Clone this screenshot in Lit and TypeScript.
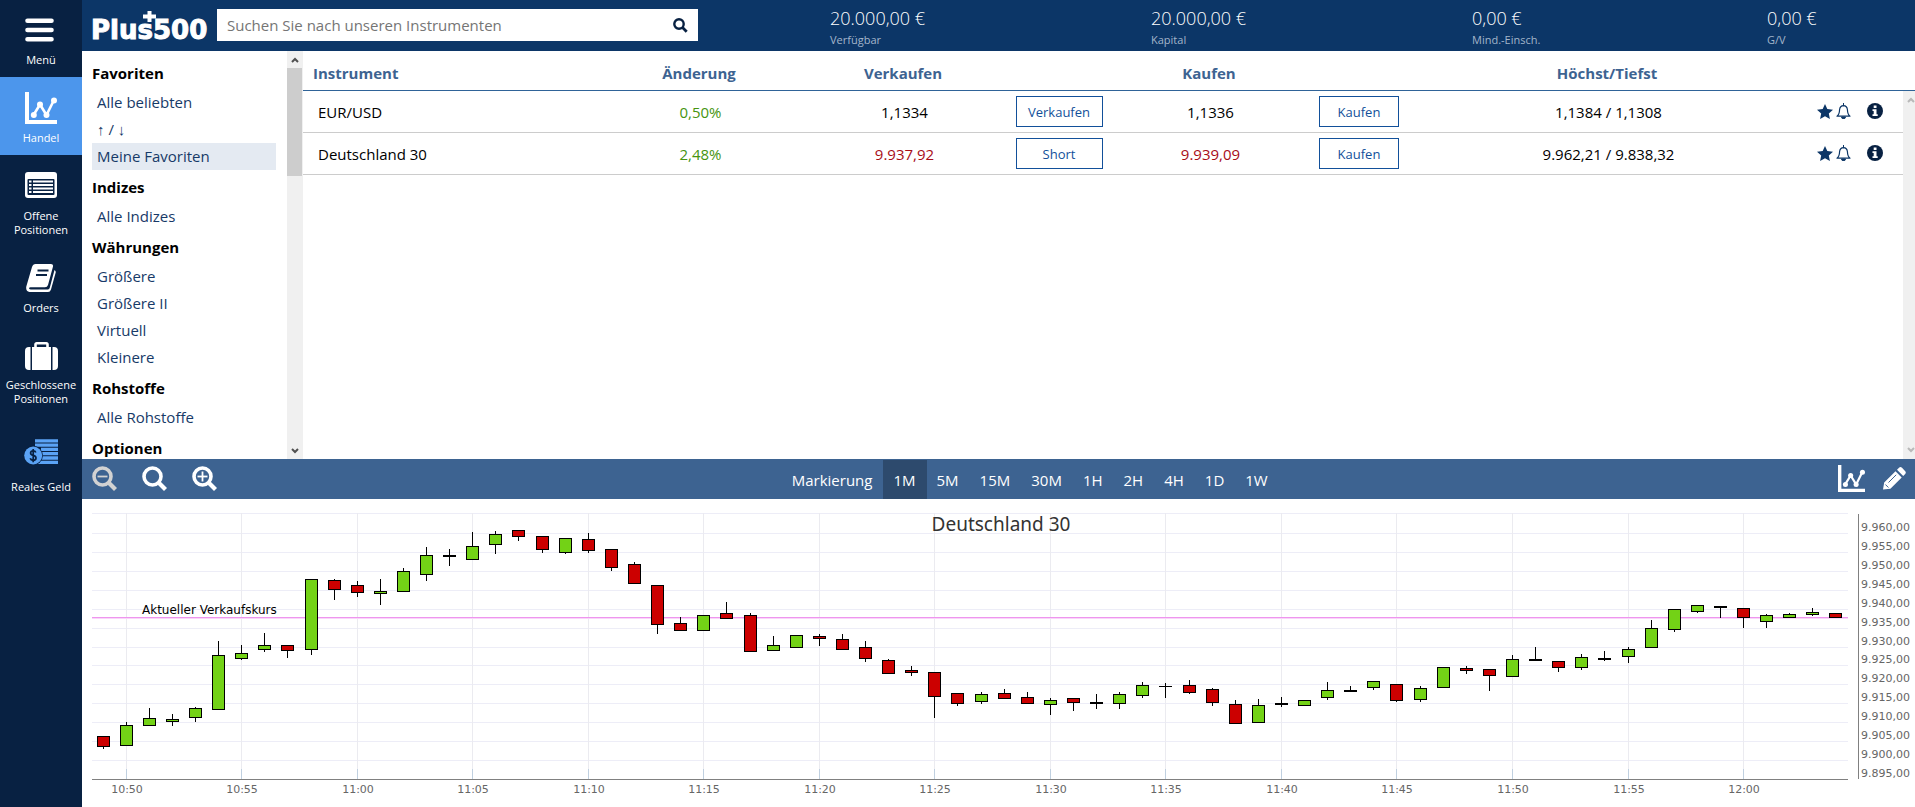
import { LitElement, html, css, svg } from "lit";
import { customElement, property, state } from "lit/decorators.js";
import { classMap } from "lit/directives/class-map.js";

const TEXT = css`"Open Sans", "Noto Sans", sans-serif`;

const chartIcon = (size: number) => html`<svg width=${size} height=${size} viewBox="0 0 32 32" aria-hidden="true">
  <path d="M0 0h4v28h28v4H0z" fill="#fff" />
  <path d="M8.500 23L15 12.500L21.500 23L29 8" fill="none" stroke="#fff" stroke-width="2.600" />
  <circle cx="8.800" cy="23" r="3" fill="#fff" /><circle cx="15" cy="12.500" r="3" fill="#fff" />
  <circle cx="21.500" cy="23" r="3" fill="#fff" /><circle cx="29" cy="8.500" r="3" fill="#fff" />
</svg>`;

const lens = (sign: string) => html`<svg width="25" height="25" viewBox="0 0 25 25" aria-hidden="true">
  <circle cx="10.500" cy="10.500" r="8.500" fill="none" stroke="currentColor" stroke-width="3.600" />
  <path d="M16.500 16.500L23.500 23.500" stroke="currentColor" stroke-width="4.200" />
  ${sign === "minus" || sign === "plus" ? svg`<path d="M5.500 10.500h10" stroke="currentColor" stroke-width="1.800" />` : ""}
  ${sign === "plus" ? svg`<path d="M10.500 5.500v10" stroke="currentColor" stroke-width="1.800" />` : ""}
</svg>`;

const arrow = (up: boolean) => html`<svg width="8" height="6" viewBox="0 0 8 6" aria-hidden="true">
  <path d=${up ? "M1 5L4 2L7 5" : "M1 1L4 4L7 1"} fill="none" stroke="currentColor" stroke-width="2" />
</svg>`;

const navIcons: Record<string, unknown> = {
  menu: html`<svg width="32" height="24" viewBox="0 0 32 24" aria-hidden="true">
    <path d="M2.500 2.700h24M2.500 12h24M2.500 21.300h24" stroke="#fff" stroke-width="4.600" stroke-linecap="round" />
  </svg>`,
  trade: chartIcon(32),
  open: html`<svg width="32" height="26" viewBox="0 0 32 26" aria-hidden="true">
    <rect width="32" height="26" rx="3" fill="#fff" />
    <rect x="2.500" y="7" width="27" height="16" rx="1" fill="#082142" />
    <path d="M4 9.500h2.500M4 13h2.500M4 16.500h2.500M4 20h2.500M8 9.500h20M8 13h20M8 16.500h20M8 20h20" stroke="#fff" stroke-width="1.900" />
  </svg>`,
  orders: html`<svg width="30" height="28" viewBox="0 0 30 28" aria-hidden="true">
    <path d="M9.500 0H25q2.500 0 2 2.500L22 21q-.7 2.200-3 2.200H4.500q-1.800.3-1.300 1.500.4.800 1.600.8H22q1.200 0 1.700-1.400L28.500 6q1.500 1 1.200 2.500L25 25.500Q24.200 28 22 28H3.500Q-.5 27.500.3 22.500L6 3Q7 0 9.500 0z" fill="#fff" />
    <path d="M11.500 6.500h11M10 11h11" stroke="#082142" stroke-width="1.800" />
  </svg>`,
  closed: html`<svg width="33" height="28" viewBox="0 0 33 28" aria-hidden="true">
    <path d="M10.500 6V2.500q0-1.200 1.200-1.200h9.600q1.200 0 1.200 1.200V6" fill="none" stroke="#fff" stroke-width="2.600" />
    <path d="M4 5h1.500v23H4q-4 0-4-4V9q0-4 4-4zM7 5h19v23H7zM27.500 5H29q4 0 4 4v15q0 4-4 4h-1.500z" fill="#fff" />
  </svg>`,
  money: html`<svg width="34" height="26" viewBox="0 0 34 26" aria-hidden="true">
    <path d="M11 1.800h23M11 6.100h23M17 10.400h17M18 14.700h16M18 19h16M14 23.300h20" stroke="#5ba3f5" stroke-width="3.300" />
    <circle cx="9.200" cy="16.500" r="9.700" fill="#082142" />
    <circle cx="9.200" cy="16.500" r="9" fill="#5ba3f5" />
    <path d="M11.800 13.500q-.5-1.600-2.700-1.600-2.500 0-2.500 2 0 1.800 2.600 2.400 2.800.7 2.800 2.700 0 2.300-2.800 2.300-2.400 0-3-2M9.200 10v13.200" fill="none" stroke="#082142" stroke-width="1.700" />
  </svg>`,
};

@customElement("side-nav")
class SideNav extends LitElement {
  static styles = css`
    :host { display: block; background: #082142; font-family: ${TEXT}; }
    .item {
      display: flex; flex-direction: column; align-items: center; gap: 7px; width: 100%; box-sizing: border-box;
      border: 0; background: none; color: #fff; font: 11px/14px ${TEXT}; cursor: pointer; margin: 0; padding: 18px 0 10px; white-space: pre-line;
    }
    .menu { gap: 11px; }
    .trade { background: #4c96ec; padding: 15px 0 10px; }
    .open { padding: 17px 0 9px; gap: 11px; }
    .orders { gap: 9px; padding-bottom: 9px; }
    .closed { gap: 8px; padding-bottom: 9px; }
    .money { padding: 24px 0 10px; gap: 15px; }
  `;
  render() {
    const items = [["menu", "Menü"], ["trade", "Handel"], ["open", "Offene\nPositionen"], ["orders", "Orders"],
      ["closed", "Geschlossene\nPositionen"], ["money", "Reales Geld"]];
    return html`<nav>${items.map(([id, label]) => html`<button class="item ${id}">${navIcons[id]}<span>${label}</span></button>`)}</nav>`;
  }
}

@customElement("top-bar")
class TopBar extends LitElement {
  static styles = css`
    :host {
      display: grid; grid-template-columns: 135px 481fr 132fr 321fr 321fr 295fr 148fr; align-items: start;
      background: #0c3667; color: #fff; font-family: ${TEXT};
    }
    .logo { position: relative; padding: 14px 0 0 9px; font: bold 26px/32px "DejaVu Sans", sans-serif; color: #fff; text-decoration: none; -webkit-text-stroke: 1px #fff; }
    .cross { position: absolute; left: 61px; top: 11px; }
    .search { display: flex; align-items: center; background: #fff; height: 32px; margin-top: 9px; }
    .box { flex: 1; min-width: 0; border: 0; outline: 0; background: none; padding: 0 0 0 10px; font: 15px/32px ${TEXT}; color: #333; }
    .box::placeholder { color: #757575; opacity: 1; }
    .go { border: 0; background: none; padding: 0 10px; display: flex; color: #082142; }
    .stat { display: flex; flex-direction: column; padding-top: 5px; white-space: nowrap; }
    .value { font-size: 18px; line-height: 26px; font-weight: 300; }
    .label { font-size: 11px; line-height: 17px; color: #a3b5ca; }
  `;
  render() {
    const stats = [["20.000,00 €", "Verfügbar"], ["20.000,00 €", "Kapital"], ["0,00 €", "Mind.-Einsch."], ["0,00 €", "G/V"]];
    return html`
      <a class="logo" href="#">Plus500<svg class="cross" width="13" height="11" viewBox="0 0 13 11" aria-hidden="true"><path d="M4.500 0h4v3.500H13v4H8.500V11h-4V7.500H0v-4h4.500z" fill="#fff" /></svg></a>
      <form class="search" role="search">
        <input class="box" type="text" aria-label="Suche" placeholder="Suchen Sie nach unseren Instrumenten" />
        <button class="go" type="button" aria-label="Suchen"><svg width="15" height="15" viewBox="0 0 15 15" aria-hidden="true"><circle cx="6" cy="6" r="4.700" fill="none" stroke="currentColor" stroke-width="2.400" /><path d="M9.500 9.500L13.700 13.700" stroke="currentColor" stroke-width="2.800" /></svg></button>
      </form>
      <span></span>
      ${stats.map(([v, l]) => html`<div class="stat"><span class="value">${v}</span><span class="label">${l}</span></div>`)}
    `;
  }
}

@customElement("instrument-list")
class InstrumentList extends LitElement {
  static styles = css`
    :host { display: grid; grid-template-columns: 1fr 16px; overflow: hidden; background: #fff; font: 15px/27px ${TEXT}; }
    .list { padding: 5px 11px 0 10px; overflow: hidden; }
    .group { font-size: 15px; line-height: 30px; margin: 0; padding: 2px 0 1px; font-weight: bold; color: #000; }
    .link { display: block; padding-left: 5px; color: #173a68; text-decoration: none; white-space: nowrap; }
    .on { background: #e4eaf2; }
    .bar { background: #f0f0f0; display: flex; flex-direction: column; align-items: center; color: #505050; }
    .end { height: 17px; display: flex; align-items: center; }
    .thumb { height: 108px; width: 15px; background: #cdcdcd; align-self: flex-start; }
    .rest { flex: 1; }
  `;
  render() {
    const groups: [string, string[]][] = [
      ["Favoriten", ["Alle beliebten", "↑ / ↓", "Meine Favoriten"]], ["Indizes", ["Alle Indizes"]],
      ["Währungen", ["Größere", "Größere II", "Virtuell", "Kleinere"]], ["Rohstoffe", ["Alle Rohstoffe"]], ["Optionen", []],
    ];
    return html`
      <div class="list">${groups.map(([name, links]) => html`<h2 class="group">${name}</h2>
        ${links.map((l) => html`<a href="#" class=${classMap({ link: true, on: l === "Meine Favoriten" })}>${l}</a>`)}`)}</div>
      <div class="bar"><span class="end">${arrow(true)}</span><span class="thumb"></span><span class="rest"></span><span class="end">${arrow(false)}</span></div>
    `;
  }
}

@customElement("quote-table")
class QuoteTable extends LitElement {
  static styles = css`
    :host { display: grid; grid-template-columns: 1fr 12px; align-items: stretch; background: #fff; overflow: hidden; font: 15px/20px ${TEXT}; }
    .quotes { width: 100%; table-layout: fixed; border-collapse: separate; border-spacing: 0; align-self: start; }
    .c1 { width: 18.500%; } .c2 { width: 12.500%; } .c3 { width: 13%; } .c4 { width: 6.500%; }
    .c5 { width: 12.250%; } .c6 { width: 6.500%; } .c7 { width: 24.500%; } .c8 { width: 6.250%; }
    .head { height: 34px; padding: 5px 0 0; border-bottom: 1px solid #2f6398; color: #3d6391; font-weight: bold; font-size: 15px; text-align: center; }
    .first { text-align: left; padding-left: 10px; }
    .cell { height: 40px; padding: 1px 0 0 3px; border-bottom: 1px solid #ccc; text-align: center; color: #000; white-space: nowrap; }
    .cell.name { text-align: left; padding-left: 15px; }
    .cell.act { padding: 0; }
    .cell.up { color: #45940f; } .cell.down { color: #a80d17; }
    .trade { width: 80px; height: 31px; padding: 0; border: 1px solid #12509a; border-radius: 0; background: #fff; color: #12509a; font: 13px/20px ${TEXT}; vertical-align: middle; }
    .wide { width: 87px; }
    .icons { display: flex; align-items: center; padding: 0 0 2px 11px; }
    .icon { border: 0; background: none; padding: 0; display: flex; color: #0c3667; margin-right: 3px; }
    .info { margin-left: 13px; color: #082142; }
    .side { display: flex; flex-direction: column; }
    .cap { height: 39px; border-bottom: 1px solid #2f6398; }
    .bar { flex: 1; background: #f0f0f0; display: flex; flex-direction: column; justify-content: space-between; align-items: flex-end; color: #b9b9b9; padding: 6px 0; overflow: hidden; }
  `;
  render() {
    const rows = [
      ["EUR/USD", "0,50%", "1,1334", "Verkaufen", "1,1336", "1,1384 / 1,1308", ""],
      ["Deutschland 30", "2,48%", "9.937,92", "Short", "9.939,09", "9.962,21 / 9.838,32", "down"],
    ];
    return html`
      <table class="quotes">
        <colgroup>${[1, 2, 3, 4, 5, 6, 7, 8].map((n) => html`<col class="c${n}" />`)}</colgroup>
        <thead><tr>
          <th class="head first">Instrument</th>
          ${["Änderung", "Verkaufen", "", "Kaufen", "", "Höchst/Tiefst", ""].map((h) => html`<th class="head">${h}</th>`)}
        </tr></thead>
        <tbody>${rows.map(([name, chg, sell, action, buy, range, tone]) => html`<tr>
          <td class="cell name">${name}</td>
          <td class="cell up">${chg}</td>
          <td class="cell ${tone}">${sell}</td>
          <td class="cell act"><button class="trade wide">${action}</button></td>
          <td class="cell ${tone}">${buy}</td>
          <td class="cell act"><button class="trade">Kaufen</button></td>
          <td class="cell">${range}</td>
          <td class="cell"><div class="icons">
            <button class="icon" aria-label="Favorit"><svg width="16" height="15" viewBox="0 0 16 15"><path d="M8 0l2.300 5 5.700.7-4.200 3.800 1.100 5.500L8 12.300 3.100 15l1.100-5.500L0 5.700 5.700 5z" fill="currentColor" /></svg></button>
            <button class="icon" aria-label="Alarm"><svg width="15" height="16" viewBox="0 0 15 16"><path d="M1 13.200Q3.400 11.500 3.600 6.500 4 2.800 7.500 2.600 11 2.800 11.400 6.500 11.600 11.500 14 13.200z" fill="none" stroke="currentColor" stroke-width="1.200" stroke-linejoin="round" /><path d="M7.500 0v3M5.500 14h4q-.4 2-2 2t-2-2z" stroke="currentColor" fill="currentColor" stroke-width="1" /></svg></button>
            <button class="icon info" aria-label="Info"><svg width="16" height="16" viewBox="0 0 16 16"><circle cx="8" cy="8" r="8" fill="currentColor" /><path d="M6.700 2.500h2.800v2.400H6.700zM5.500 6.300h4v5h1.200V13H5.500v-1.700h1.200V8H5.500z" fill="#fff" /></svg></button>
          </div></td>
        </tr>`)}</tbody>
      </table>
      <div class="side"><div class="cap"></div><div class="bar">${arrow(true)}${arrow(false)}</div></div>
    `;
  }
}

@customElement("chart-tools")
class ChartTools extends LitElement {
  @state() span = "1M";
  static styles = css`
    :host { display: flex; align-items: stretch; background: #3d6391; color: #fff; font: 15px/20px ${TEXT}; }
    .left { flex: 696; display: flex; align-items: center; gap: 25px; padding-left: 10px; }
    .right { flex: 633; display: flex; align-items: center; justify-content: flex-end; gap: 18px; padding-right: 9px; }
    .tool { border: 0; background: none; padding: 0; color: #fff; display: flex; }
    .tool.off { color: #d2d2d2; }
    .spans { display: flex; align-items: stretch; padding-top: 1px; }
    .span { border: 0; background: none; color: #fff; font: 15px/20px ${TEXT}; padding: 0 11px 0 10px; }
    .span.on { background: #2d4a6d; }
    .left, .right { padding-bottom: 2px; }
  `;
  render() {
    return html`
      <div class="left">
        <button class="tool off" aria-label="Verkleinern">${lens("minus")}</button>
        <button class="tool" aria-label="Zoom zurücksetzen">${lens("")}</button>
        <button class="tool" aria-label="Vergrößern">${lens("plus")}</button>
      </div>
      <div class="spans">${["Markierung", "1M", "5M", "15M", "30M", "1H", "2H", "4H", "1D", "1W"].map((s) =>
        html`<button class=${classMap({ span: true, on: s === this.span })} @click=${() => (this.span = s)}>${s}</button>`)}</div>
      <div class="right">
        <button class="tool" aria-label="Charttyp">${chartIcon(27)}</button>
        <button class="tool" aria-label="Zeichnen"><svg width="23" height="23" viewBox="0 0 23 23" aria-hidden="true">
          <path d="M0 22.500L1.200 15.500 12.500 4.200 18.700 10.400 7.400 21.700zM14 2.700L16 .7Q17.500-.5 19 .8L22 3.900Q23.500 5.400 22.200 6.900L20.200 8.900z" fill="#fff" />
          <path d="M5.500 15.500L13.200 7.800M2.400 17.500l3 3" stroke="#3d6391" stroke-width="1" /></svg></button>
      </div>
    `;
  }
}

/* One row per minute: colour, high, body top, body bottom, low, in points below the top of the plot. */
type Candle = [string, number, number, number, number];
const candles: Candle[] = [
  ["r", 223, 223, 234, 236], ["g", 209, 212, 233, 233], ["g", 195, 205, 213, 213], ["g", 201, 206, 209, 213], ["g", 194, 195, 205, 209],
  ["g", 128, 142, 197, 197], ["g", 132, 140, 146, 147], ["g", 120, 132, 137, 139], ["r", 132, 132, 138, 145], ["g", 66, 66, 137, 142],
  ["r", 66, 67, 77, 87], ["r", 68, 72, 80, 84], ["g", 66, 78, 81, 92], ["g", 55, 58, 79, 79], ["g", 34, 42, 62, 68],
  ["k", 36, 42, 44, 53], ["g", 19, 33, 47, 47], ["g", 18, 21, 32, 41], ["r", 17, 17, 24, 28], ["r", 23, 23, 37, 40],
  ["g", 25, 25, 40, 41], ["r", 20, 26, 38, 40], ["r", 36, 36, 55, 58], ["r", 49, 51, 71, 71], ["r", 72, 72, 112, 121],
  ["r", 104, 110, 118, 118], ["g", 102, 102, 118, 118], ["r", 89, 100, 106, 106], ["r", 100, 102, 139, 139], ["g", 123, 132, 138, 138],
  ["g", 122, 122, 135, 135], ["r", 121, 123, 126, 133], ["r", 121, 126, 137, 137], ["r", 128, 134, 146, 149], ["r", 146, 147, 161, 161],
  ["r", 153, 157, 160, 163], ["r", 159, 159, 184, 205], ["r", 180, 180, 191, 193], ["g", 179, 181, 189, 191], ["r", 176, 180, 186, 186],
  ["r", 179, 184, 191, 191], ["g", 185, 187, 192, 202], ["r", 185, 185, 190, 198], ["k", 181, 189, 191, 196], ["g", 179, 181, 191, 196],
  ["g", 169, 172, 183, 185], ["k", 170, 173, 174, 185], ["r", 167, 172, 180, 181], ["r", 175, 176, 190, 193], ["r", 187, 191, 211, 211],
  ["g", 186, 192, 210, 210], ["k", 184, 190, 192, 194], ["g", 187, 187, 193, 193], ["g", 169, 177, 185, 187], ["k", 173, 177, 179, 179],
  ["g", 168, 168, 175, 177], ["r", 171, 171, 188, 189], ["g", 173, 175, 187, 189], ["g", 154, 154, 175, 175], ["r", 153, 155, 158, 161],
  ["r", 156, 156, 163, 178], ["g", 142, 146, 164, 164], ["k", 134, 146, 148, 148], ["r", 148, 148, 155, 159], ["g", 141, 144, 155, 157],
  ["k", 138, 145, 147, 148], ["g", 134, 136, 144, 150], ["g", 107, 115, 135, 135], ["g", 96, 96, 117, 119], ["g", 92, 92, 99, 100],
  ["k", 93, 93, 95, 105], ["r", 95, 95, 105, 115], ["g", 101, 102, 109, 115], ["g", 100, 101, 105, 105], ["g", 95, 99, 102, 103],
  ["r", 100, 100, 105, 105],
];
const FILL: Record<string, string> = { r: "#cc0000", g: "#73d216", k: "#000" };

@customElement("price-chart")
class PriceChart extends LitElement {
  @property() name = "";
  @state() width = 1833;
  private watcher = new ResizeObserver(() => (this.width = this.clientWidth));
  static styles = css`
    :host { display: block; background: #fff; min-width: 0; overflow: hidden; }
    .chart { display: block; }
    .title { font: 19px "Noto Sans", sans-serif; fill: #333; }
    .axis { font: 11px "DejaVu Sans", sans-serif; fill: #666; }
    .mark { font: 12px "DejaVu Sans", sans-serif; fill: #000; }
  `;
  connectedCallback() { super.connectedCallback(); this.watcher.observe(this); }
  disconnectedCallback() { super.disconnectedCallback(); this.watcher.disconnect(); }
  render() {
    const left = 10, top = 14, height = 266, right = this.width - 67;
    const step = (right - left) / candles.length;
    const base = top + height;
    const mid = (i: number) => Math.round(left + (i + 0.5) * step) - 1;
    const row = (i: number) => Math.round(base - (i * 246) / 13);
    const money = (v: number) => v.toFixed(2).replace(".", ",").replace(/(\d)(?=\d{3},)/, "$1.");
    const minute = (m: number) => `${10 + Math.floor(m / 60)}:${String(m % 60).padStart(2, "0")}`;
    const times = Array.from({ length: 15 }, (_, n) => n * 5 + 1);
    return html`<svg class="chart" width=${this.width} height="308" role="img" aria-label=${this.name}>
      ${Array.from({ length: 14 }, (_, n) => svg`<rect x=${left} y=${n === 13 ? top : row(n + 1)} width=${right - left} height="1" fill="#ededf7" />`)}
      ${times.map((i) => svg`<rect x=${mid(i)} y=${top} width="1" height=${height} fill="#ebebf0" />
        <rect x=${mid(i)} y=${base - 10} width="1" height="10" fill="#c0d0e0" />
        <text class="axis" x=${mid(i) + 1} y="294" text-anchor="middle">${minute(49 + i)}</text>`)}
      <rect x=${left} y=${base} width=${right - left} height="1" fill="#808080" />
      <rect x=${right + 10} y=${top + 1} width="1" height=${height - 1} fill="#808080" />
      ${Array.from({ length: 14 }, (_, n) => svg`<text class="axis" x=${right + 13} y=${row(n) - 2}>${money(9895 + n * 5)}</text>`)}
      <text class="title" x=${left + (this.width - 15) / 2} y="32" text-anchor="middle">${this.name}</text>
      <rect x=${left} y=${top + 104} width=${right - left} height="1" fill="#ee96ee" />
      <rect x=${left} y=${top + 105} width=${right - left} height="1" fill="#fad4fa" />
      ${candles.map(([tone, high, a, b, low], i) => svg`
        <rect x=${mid(i)} y=${top + high} width="1" height=${low - high} fill="#000" />
        <rect x=${mid(i) - 6} y=${top + a} width="13" height=${b - a} fill="#000" />
        ${b - a > 2 ? svg`<rect x=${mid(i) - 5} y=${top + a + 1} width="11" height=${b - a - 2} fill=${FILL[tone]} />` : ""}`)}
      <text class="mark" x=${left + 50} y="115">Aktueller Verkaufskurs</text>
    </svg>`;
  }
}

@customElement("app-root")
class AppRoot extends LitElement {
  static styles = css`
    :host { display: grid; grid-template-columns: 82px minmax(0, 1fr); height: 100vh; overflow: hidden; background: #fff; }
    .main { display: grid; grid-template-rows: 51px minmax(0, 1fr) 40px auto; min-width: 0; min-height: 0; }
    .market { display: grid; grid-template-columns: 221px minmax(0, 1fr); min-height: 0; }
  `;
  render() {
    return html`
      <side-nav></side-nav>
      <div class="main">
        <top-bar></top-bar>
        <div class="market"><instrument-list></instrument-list><quote-table></quote-table></div>
        <chart-tools></chart-tools>
        <price-chart name="Deutschland 30"></price-chart>
      </div>
    `;
  }
}
